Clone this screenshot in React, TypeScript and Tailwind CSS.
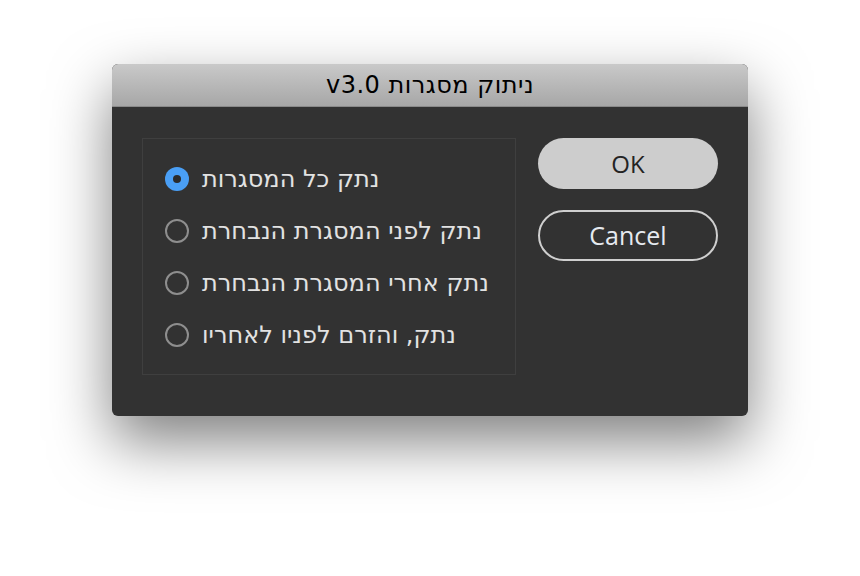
const options = [
  "נתק כל המסגרות",
  "נתק לפני המסגרת הנבחרת",
  "נתק אחרי המסגרת הנבחרת",
  "נתק, והזרם לפניו לאחריו",
];

function Radio({ checked }: { checked: boolean }) {
  if (checked) {
    return (
      <span className="flex h-6 w-6 shrink-0 items-center justify-center rounded-full bg-[#4a9ff5]">
        <span className="h-2 w-2 rounded-full bg-[#2b2b2b]" />
      </span>
    );
  }
  return <span className="h-6 w-6 shrink-0 rounded-full border-2 border-[#8e8e8e]" />;
}

export default function App() {
  return (
    <div className="flex h-[576px] w-[860px] items-start bg-white pl-[112px] pt-[64px]">
      <div className="w-[636px] overflow-hidden rounded-[6px] bg-[#323232] shadow-[0_25px_60px_rgba(0,0,0,0.5)]">
        <div
          className="flex h-[43px] items-center justify-center border-b border-[#8a8a8a] bg-gradient-to-b from-[#c9c9c9] to-[#a7a7a7] text-[24px] tracking-[0.5px] text-black"
          style={{ fontFamily: '"DejaVu Sans", sans-serif' }}
        >
          <span dir="rtl">ניתוק מסגרות v3.0</span>
        </div>
        <div className="flex gap-[22px] pb-[41px] pl-[30px] pr-[30px] pt-[31px]">
          <div className="flex h-[237px] w-[374px] flex-col gap-6 border border-[#3f3f3f] pl-[22px] pt-[26px]">
            {options.map((label, i) => (
              <div key={label} className="flex h-7 items-center gap-[13px]">
                <Radio checked={i === 0} />
                <span
                  dir="rtl"
                  className="text-[24px] leading-7 text-[#e2e2e2]"
                  style={{ fontFamily: '"DejaVu Sans", sans-serif' }}
                >
                  {label}
                </span>
              </div>
            ))}
          </div>
          <div
            className="flex flex-col gap-[21px]"
            style={{ fontFamily: '"Open Sans", sans-serif' }}
          >
            <button className="h-[51px] w-[180px] rounded-full bg-[#cdcdcd] text-[24px] text-[#232323]">
              OK
            </button>
            <button className="h-[51px] w-[180px] rounded-full border-2 border-[#cfcfcf] text-[25px] text-[#e6eaf0]">
              Cancel
            </button>
          </div>
        </div>
      </div>
    </div>
  );
}
